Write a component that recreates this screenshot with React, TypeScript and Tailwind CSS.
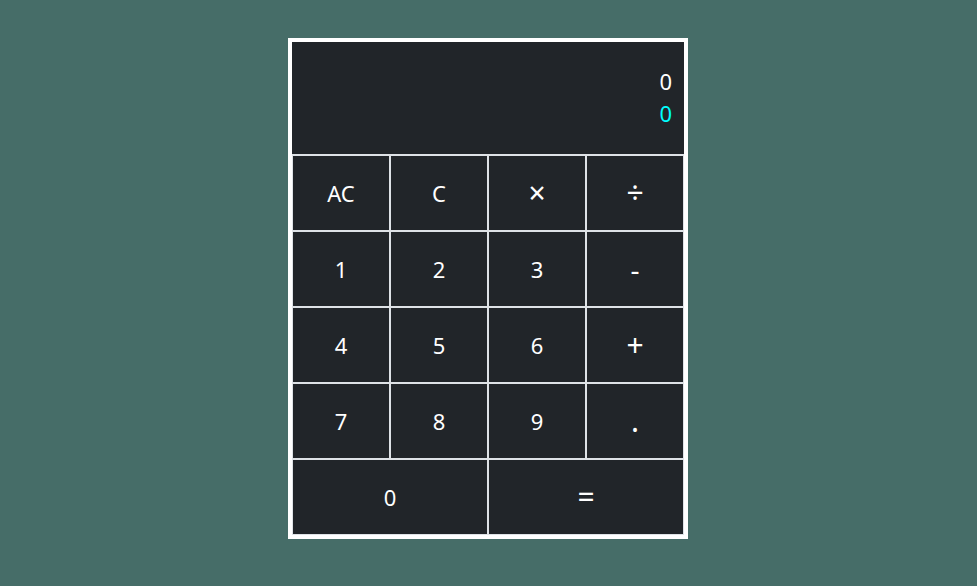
import React from "react";

const Btn = ({ label, wide = false, size = "text-[22px]" }: { label: string; wide?: boolean; size?: string }) => (
  <button
    className={
      (wide ? "col-span-2 " : "") +
      size +
      " h-[76px] border border-[#dee2e6] bg-[#212529] text-white flex items-center justify-center leading-none"
    }
  >
    {label}
  </button>
);

export default function App() {
  return (
    <div
      className="w-full h-[586px] bg-[#466d68] flex justify-start pl-[288px] pt-[38px]"
      style={{ fontFamily: '"Noto Sans", "Open Sans", sans-serif' }}
    >
      <div className="w-[400px] h-[501px] border-4 border-white bg-[#212529] flex flex-col">
        <div className="h-[113px] border-b border-[#dee2e6] flex flex-col justify-center items-end pr-[12px] pb-[2px] text-[22px] leading-[32px]">
          <div className="text-white">0</div>
          <div className="text-[#00ffff]">0</div>
        </div>
        <div className="grid grid-cols-4">
          <Btn label="AC" />
          <Btn label="C" />
          <Btn label="×" size="text-[30px]" />
          <Btn label="÷" size="text-[30px]" />
          <Btn label="1" />
          <Btn label="2" />
          <Btn label="3" />
          <Btn label="-" size="text-[28px]" />
          <Btn label="4" />
          <Btn label="5" />
          <Btn label="6" />
          <Btn label="+" size="text-[30px]" />
          <Btn label="7" />
          <Btn label="8" />
          <Btn label="9" />
          <Btn label="." size="text-[30px]" />
          <Btn label="0" wide />
          <Btn label="=" wide size="text-[30px]" />
        </div>
      </div>
    </div>
  );
}
